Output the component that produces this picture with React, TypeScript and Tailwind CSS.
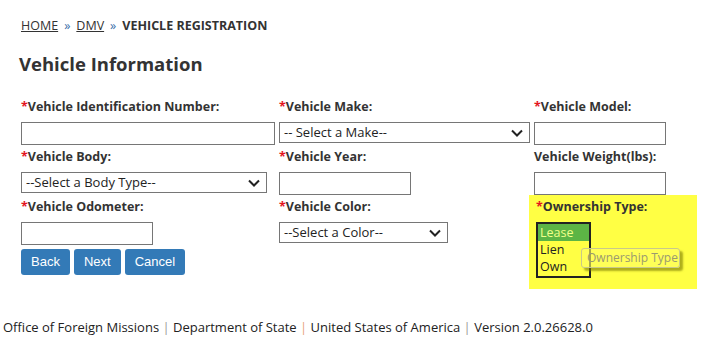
import React from 'react'

function Chevron() {
  return (
    <svg width="12" height="8" viewBox="0 0 12 8" className="shrink-0">
      <path d="M1 1.5 L6 6.5 L11 1.5" fill="none" stroke="#222" strokeWidth="2" />
    </svg>
  )
}

function Label({ text, req = true }: { text: string; req?: boolean }) {
  return (
    <div className="h-[27px] pt-[3px] text-[12.5px] font-bold text-[#333] leading-[18px]">
      {req && <span className="text-[#e4151f]">*</span>}
      {text}
    </div>
  )
}

function TextBox({ w }: { w: string }) {
  return <div className={`h-[23px] border border-[#767676] bg-white ${w}`} />
}

function Select({ w, text }: { w: string; text: string }) {
  return (
    <div className={`h-[21px] border border-[#767676] bg-white flex items-center justify-between pl-[4px] pr-[6px] text-[13px] text-[#222] ${w}`}>
      <span>{text}</span>
      <Chevron />
    </div>
  )
}

function Btn({ children }: { children: React.ReactNode }) {
  return (
    <button
      className="h-[26px] px-[10px] rounded-[3px] bg-[#337ab7] text-white text-[13px]"
      style={{ fontFamily: '"Liberation Sans", Arial, sans-serif' }}
    >
      {children}
    </button>
  )
}

export default function App() {
  return (
    <main className="w-[725px] h-[355px] bg-white text-[#333]" style={{ fontFamily: '"Open Sans", sans-serif' }}>
      <div className="pl-[21px] pt-[17px] text-[12.5px] flex items-center gap-[6px] h-[18px] box-content">
        <a className="underline">HOME</a>
        <span className="text-[#3a6ea8]">»</span>
        <a className="underline">DMV</a>
        <span className="text-[#3a6ea8]">»</span>
        <span className="font-bold">VEHICLE REGISTRATION</span>
      </div>

      <h1 className="pl-[19px] mt-[17px] text-[18.5px] font-bold leading-[24px]">Vehicle Information</h1>

      <div className="pl-[21px] mt-[19px] grid grid-cols-[258px_255px_auto]">
        <div>
          <Label text="Vehicle Identification Number:" />
          <TextBox w="w-[254px]" />
        </div>
        <div>
          <Label text="Vehicle Make:" />
          <Select w="w-[251px]" text="-- Select a Make--" />
        </div>
        <div>
          <Label text="Vehicle Model:" />
          <TextBox w="w-[132px]" />
        </div>

        <div>
          <Label text="Vehicle Body:" />
          <Select w="w-[246px]" text="--Select a Body Type--" />
        </div>
        <div>
          <Label text="Vehicle Year:" />
          <TextBox w="w-[132px]" />
        </div>
        <div>
          <Label text="Vehicle Weight(lbs):" req={false} />
          <TextBox w="w-[132px]" />
        </div>

        <div>
          <Label text="Vehicle Odometer:" />
          <TextBox w="w-[132px]" />
          <div className="mt-[4px] flex gap-[4px]">
            <Btn>Back</Btn>
            <Btn>Next</Btn>
            <Btn>Cancel</Btn>
          </div>
        </div>
        <div>
          <Label text="Vehicle Color:" />
          <Select w="w-[169px]" text="--Select a Color--" />
        </div>
        <div className="-ml-[5px] relative w-[168px] h-[94px] bg-[#ffff44] pl-[7px]">
          <Label text="Ownership Type:" />
          <div className="w-[55px] h-[56px] border-2 border-[#222] text-[12.5px] leading-[17px]">
            <div className="bg-[#5cb545] text-[#f0ff8a] pl-[2px]">Lease</div>
            <div className="pl-[2px] text-[#222]">Lien</div>
            <div className="pl-[2px] text-[#222]">Own</div>
          </div>
          <div className="absolute left-[52px] top-[53px] w-[99px] h-[20px] rounded-[3px] border border-[#c9c98a] bg-[#ffff66]/60 shadow-[3px_3px_2px_rgba(120,120,0,0.6)] text-[12px] text-[#9a9a70] leading-[18px] pl-[5px]">
            Ownership Type
          </div>
        </div>
      </div>

      <div className="mt-[29px] pl-[3px] text-[13px] text-[#222] leading-[18px]">
        Office of Foreign Missions <span className="text-[#999]">|</span> Department of State <span className="text-[#e8a080]">|</span> United States of America <span className="text-[#999]">|</span> Version 2.0.26628.0
      </div>
    </main>
  )
}
